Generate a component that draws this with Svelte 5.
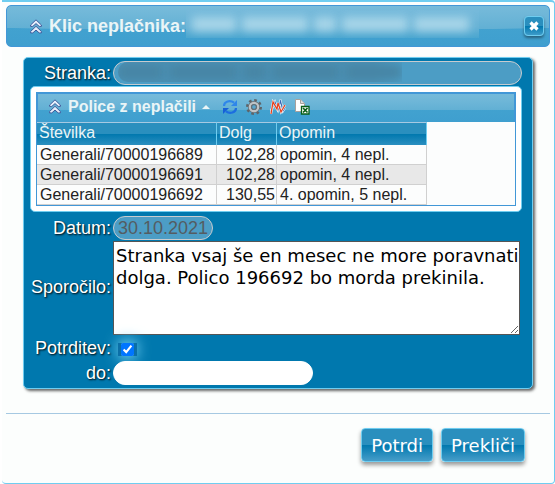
<script>
	let rows = [
		{ number: 'Generali/70000196689', debt: '102,28', reminder: 'opomin, 4 nepl.' },
		{ number: 'Generali/70000196691', debt: '102,28', reminder: 'opomin, 4 nepl.' },
		{ number: 'Generali/70000196692', debt: '130,55', reminder: '4. opomin, 5 nepl.' }
	];
	let customer = '';
	let date = '30.10.2021';
	let message =
		'Stranka vsaj še en mesec ne more poravnati dolga. Polico 196692 bo morda prekinila.';
	let confirmed = true;
	let until = '';
	let open = true;

	const close = () => (open = false);
</script>

{#snippet chevrons()}
	<svg class="chevrons" width="12" height="15" viewBox="0 0 12 15" aria-hidden="true">
		<path d="M6 .8 11.4 6v1.4H9.2L6 4.6 2.8 7.4H.6V6z" />
		<path d="M6 7.3l5.4 5.2v1.4H9.2L6 11.1l-3.2 2.8H.6v-1.4z" />
	</svg>
{/snippet}

{#snippet hiddenName()}
	<i class="w4"></i><i class="w6"></i><i class="w2"></i><i class="w6"></i><i class="w5"></i>
{/snippet}

{#if open}
	<div class="dialog" role="dialog" aria-labelledby="dialog-title">
		<header class="titlebar">
			{@render chevrons()}
			<h1 id="dialog-title">Klic neplačnika:</h1>
			<span class="redacted title-name">{@render hiddenName()}</span>
			<button class="close" type="button" aria-label="Zapri" on:click={close}>
				<svg width="10" height="10" viewBox="0 0 10 10">
					<path d="M1.5 1.5l7 7M8.5 1.5l-7 7" stroke="#fff" stroke-width="3.2" />
				</svg>
			</button>
		</header>

		<div class="form">
			<label for="customer">Stranka:</label>
			<div class="customer">
				<input id="customer" class="pill" type="text" bind:value={customer} disabled />
				<span class="redacted customer-name">{@render hiddenName()}</span>
			</div>

			<div class="policies">
				<div class="frame">
					<div class="toolbar">
						{@render chevrons()}
						<h2>Police z neplačili</h2>
						<span class="sort"></span>
						<button type="button" aria-label="Osveži">
							<svg width="16" height="16" viewBox="0 0 16 16" fill="none">
								<path d="M2 7C2 2.5 8 .5 12 3.6" stroke="#2f86ea" stroke-width="2.2" />
								<path d="M15 1v6H9z" fill="#2f86ea" />
								<path d="M14 9c0 4.5-6 6.5-10 3.4" stroke="#1c6de0" stroke-width="2.2" />
								<path d="M1 15V9h6z" fill="#1560d8" />
							</svg>
						</button>
						<button type="button" aria-label="Nastavitve">
							<svg width="16" height="16" viewBox="0 0 16 16" fill="none">
								<circle cx="8" cy="8" r="6.6" stroke="#5d6469" stroke-width="2.8" stroke-dasharray="2.6 2.58" />
								<circle cx="8" cy="8" r="4.2" stroke="#686e73" stroke-width="3.6" />
								<circle cx="8" cy="8" r="4.2" stroke="#bfc3c6" stroke-width="2.2" />
								<circle cx="8" cy="8" r="2.4" fill="#58a6ce" stroke="#62686c" />
							</svg>
						</button>
						<button type="button" aria-label="Graf">
							<svg width="16" height="16" viewBox="0 0 16 16" fill="none">
								<path d="M1 12L5 3l3 8 2.5-9L13 12l2-3" stroke="#fff" stroke-width="2.2" />
								<path d="M1 12L5 3l3 8 2.5-9L13 12l2-3" stroke="#3467b4" stroke-width="1.1" />
								<path d="M1 15L3 3l4 7 1-6 3 9 4-7" stroke="#fff" stroke-width="2.2" />
								<path d="M1 15L3 3l4 7 1-6 3 9 4-7" stroke="#e6401c" stroke-width="1.3" />
							</svg>
						</button>
						<button type="button" aria-label="Izvoz v Excel">
							<svg width="16" height="16" viewBox="0 0 16 16">
								<path d="M1.5.5h5l4 4v8h-9z" fill="#fff" stroke="#a8a19c" />
								<path d="M6.5.5v4h4" fill="#ddd" stroke="#a8a19c" />
								<path d="M7.5 7.5H15V15H7.5z" fill="#fff" stroke="#075e16" stroke-width="1.3" />
								<path d="M9 9l4.5 4.5M13.5 9L9 13.5" stroke="#075e16" stroke-width="1.7" />
							</svg>
						</button>
					</div>
					<table>
						<thead>
							<tr><th class="number">Številka</th><th class="debt">Dolg</th><th class="reminder">Opomin</th></tr>
						</thead>
						<tbody>
							{#each rows as row}
								<tr>
									<td>{row.number}</td>
									<td class="amount">{row.debt}</td>
									<td>{row.reminder}</td>
								</tr>
							{/each}
						</tbody>
					</table>
				</div>
			</div>

			<label for="date">Datum:</label>
			<input id="date" class="pill date" type="text" bind:value={date} disabled />

			<label for="message">Sporočilo:</label>
			<textarea id="message" spellcheck="false" bind:value={message}></textarea>

			<label for="confirmed">Potrditev:</label>
			<span class="check"><input id="confirmed" type="checkbox" bind:checked={confirmed} /></span>

			<label for="until">do:</label>
			<input id="until" class="pill until" type="text" bind:value={until} />
		</div>

		<footer>
			<button type="button">Potrdi</button>
			<button type="button" on:click={close}>Prekliči</button>
		</footer>
	</div>
{/if}

<style>
	:global(body) {
		background: #fff;
	}

	* {
		box-sizing: border-box;
	}

	.dialog {
		margin-left: 2px;
		padding: 3px 4px 21px;
		background: #fcfefd;
		border: 1px solid #6fcdf0;
		border-top-width: 2px;
		border-left: 0;
		border-radius: 0 4px 4px 4px;
		font-family: 'Liberation Sans', Arial, sans-serif;
		font-size: 18px;
	}

	.titlebar {
		display: flex;
		align-items: center;
		height: 42px;
		padding: 0 5px 0 23px;
		border: 1px solid #4297d7;
		border-radius: 5px;
	}

	.titlebar,
	.toolbar {
		background:
			radial-gradient(200% 58% at 50% 0, #79bcdb 0, #62b0d4 99%, transparent 100%),
			linear-gradient(#45a5d0, #3f9fcf);
	}

	h1,
	h2 {
		margin: 0 0 0 7px;
		color: #eaf5f7;
		font-weight: bold;
		white-space: nowrap;
	}

	h1 {
		font-size: 18px;
	}

	h2 {
		font-size: 16px;
	}

	.chevrons {
		flex: none;
		fill: #e6eefa;
		stroke: #3e5b9c;
	}

	.redacted {
		display: flex;
		align-items: center;
		gap: 6px;
		overflow: hidden;
	}

	.redacted i {
		height: 14px;
		filter: blur(5px);
	}

	.w2 {
		flex: 2;
	}

	.w4 {
		flex: 4;
	}

	.w5 {
		flex: 5;
	}

	.w6 {
		flex: 6;
	}

	.title-name {
		flex: 1;
		height: 28px;
		margin: 0 45px 4px 0;
		padding: 0 10px 0 6px;
		background: linear-gradient(#76badb, #68b3d6 60%, #4aa6d0);
	}

	.title-name i {
		background: #a9d6e9;
	}

	.close {
		display: flex;
		align-items: center;
		justify-content: center;
		width: 20px;
		height: 20px;
		padding: 0;
		border: 1px solid #6fcdf0;
		border-radius: 4px;
		background: linear-gradient(#2a8fbe 50%, #0078ae 50%, #3d9bc9);
		box-shadow: 0 2px 3px rgba(0, 0, 0, 0.4);
	}

	.form {
		display: grid;
		grid-template-columns: 82px 1fr;
		column-gap: 2px;
		align-items: center;
		margin: 10px 17px 0;
		padding: 3px 5px;
		border: 1px solid #6fcdf0;
		border-radius: 5px;
		background: #0078ae;
		box-shadow: 2px 2px 3px rgba(0, 0, 0, 0.6);
	}

	label {
		color: #fff;
		text-align: right;
		text-shadow: 1px 1px 2px #000;
	}

	.pill {
		display: block;
		height: 24px;
		padding: 0 4px;
		border: 1px solid #fff;
		border-radius: 12px;
		background: #fff;
		font: inherit;
	}

	.pill:disabled {
		border-color: #c8cccf;
		background: #4c9dc5;
		color: #545c62;
	}

	.customer {
		display: grid;
		width: 409px;
		max-width: 100%;
	}

	.customer > * {
		grid-area: 1 / 1;
	}

	.customer .pill {
		width: 100%;
	}

	.customer-name {
		height: 20px;
		margin: 1px 120px 3px 5px;
		border-radius: 10px 0 0 10px;
		background: linear-gradient(90deg, #4b91b5 90%, #4c9dc5);
	}

	.customer-name i {
		background: #4785a4;
	}

	.policies {
		grid-column: 1 / -1;
		margin: 1px 5px 4px 1px;
		padding: 5px;
		border: 1px solid #6fcdf0;
		border-radius: 5px;
		background: #fff;
	}

	.frame {
		border: 1px solid #4297d7;
		background: #fcfdfd;
	}

	.toolbar {
		display: flex;
		align-items: center;
		height: 29px;
		padding: 0 0 3px 11px;
		border: 1px solid #4297d7;
		border-bottom: 0;
	}

	.toolbar button {
		width: 16px;
		height: 16px;
		margin-right: 8px;
		padding: 0;
		border: 0;
		background: none;
	}

	.toolbar svg {
		display: block;
	}

	.sort {
		margin: 0 12px 0 6px;
		border: 4px solid transparent;
		border-top: 0;
		border-bottom-color: #eaf5f7;
	}

	table {
		border-collapse: separate;
		border-spacing: 0;
		font-size: 16px;
		line-height: 19px;
		color: #222;
	}

	th {
		height: 23px;
		padding: 0 2px 3px;
		border-right: 1px solid #6fcdf0;
		border-top: 1px solid #a6c9e2;
		background: linear-gradient(#2a8fbe 50%, #0078ae 50%, #2b8fc0);
		color: #eaf5f7;
		font-weight: normal;
		text-align: left;
	}

	.number {
		width: 180px;
	}

	.debt {
		width: 60px;
	}

	.reminder {
		width: 150px;
	}

	td {
		padding: 0 2px 0 3px;
		border-right: 1px solid #d0d0d0;
		border-bottom: 1px solid #d0d0d0;
	}

	tr:nth-child(even) td {
		background: #e8e8e8;
	}

	td.amount {
		padding-right: 1px;
		text-align: right;
	}

	.date {
		width: 100px;
	}

	textarea {
		display: block;
		width: 407px;
		max-width: 100%;
		height: 94px;
		margin-top: 1px;
		padding: 3px 0 3px 2px;
		border: 1px solid #555;
		background: #fff;
		color: #000;
		font: 18px/22px 'DejaVu Sans', Verdana, sans-serif;
		resize: both;
	}

	.check {
		display: flex;
		align-items: center;
		height: 26px;
		padding: 2px 0 0 8px;
	}

	.check input {
		width: 13px;
		height: 13px;
		margin: 0;
		box-shadow:
			-3px 0 #0a6fa8,
			3px 0 #0a6fa8,
			0 0 14px 3px #6fcdf0;
		accent-color: #0075ff;
	}

	.until {
		width: 200px;
	}

	footer {
		display: flex;
		justify-content: flex-end;
		gap: 8px;
		margin-top: 24px;
		padding: 14px 25px 0 0;
		border-top: 1px solid #a6c9e2;
	}

	footer button {
		height: 34px;
		padding: 0 9px;
		border: 1px solid #6fcdf0;
		border-radius: 4px;
		background: linear-gradient(#2a8fbe 50%, #0078ae 50%, #469dc9);
		box-shadow: 0 3px 4px rgba(0, 0, 0, 0.4);
		color: #fff;
		font: 18px 'DejaVu Sans', Verdana, sans-serif;
	}
</style>
